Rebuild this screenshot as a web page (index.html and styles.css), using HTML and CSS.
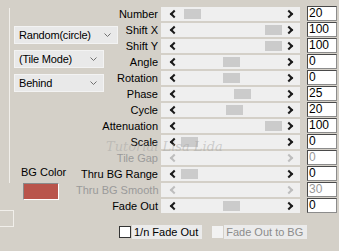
FILE: index.html
```html
<!DOCTYPE html>
<html lang="en">
<head>
    <meta charset="UTF-8">
    <meta name="viewport" content="width=device-width, initial-scale=1.0">
    <title>Tile Settings</title>
    <link rel="stylesheet" href="styles.css">
</head>
<body>
    <div class="dialog">
        <div class="side">
            <div class="frame">
                <div class="select wide">Random(circle)<svg class="chev" width="7" height="4" viewBox="0 0 7 4"><polyline points="0.5,0.5 3.5,3.5 6.5,0.5"/></svg></div>
                <div class="select">(Tile Mode)<svg class="chev" width="7" height="4" viewBox="0 0 7 4"><polyline points="0.5,0.5 3.5,3.5 6.5,0.5"/></svg></div>
                <div class="select">Behind<svg class="chev" width="7" height="4" viewBox="0 0 7 4"><polyline points="0.5,0.5 3.5,3.5 6.5,0.5"/></svg></div>
                <div class="bg-label">BG Color</div>
            </div>
            <div class="swatch"></div>
            <div class="stub"></div>
        </div>

        <div class="main">
            <div class="params">
                <label>Number</label>
                <div class="slider"><span class="arr l"></span><span class="thumb" style="left: 23px"></span><span class="arr r"></span></div>
                <div class="num">20</div>

                <label>Shift X</label>
                <div class="slider"><span class="arr l"></span><span class="thumb" style="left: 104px"></span><span class="arr r"></span></div>
                <div class="num">100</div>

                <label>Shift Y</label>
                <div class="slider"><span class="arr l"></span><span class="thumb" style="left: 104px"></span><span class="arr r"></span></div>
                <div class="num">100</div>

                <label>Angle</label>
                <div class="slider"><span class="arr l"></span><span class="thumb" style="left: 62px"></span><span class="arr r"></span></div>
                <div class="num">0</div>

                <label>Rotation</label>
                <div class="slider"><span class="arr l"></span><span class="thumb" style="left: 62px"></span><span class="arr r"></span></div>
                <div class="num">0</div>

                <label>Phase</label>
                <div class="slider"><span class="arr l"></span><span class="thumb" style="left: 73px"></span><span class="arr r"></span></div>
                <div class="num">25</div>

                <label>Cycle</label>
                <div class="slider"><span class="arr l"></span><span class="thumb" style="left: 65px"></span><span class="arr r"></span></div>
                <div class="num">20</div>

                <label>Attenuation</label>
                <div class="slider"><span class="arr l"></span><span class="thumb" style="left: 104px"></span><span class="arr r"></span></div>
                <div class="num">100</div>

                <label>Scale</label>
                <div class="slider"><span class="arr l"></span><span class="thumb" style="left: 20px"></span><span class="arr r"></span></div>
                <div class="num">0</div>

                <label class="off">Tile Gap</label>
                <div class="slider off"><span class="arr l"></span><span class="arr r"></span></div>
                <div class="num off">0</div>

                <label>Thru BG Range</label>
                <div class="slider"><span class="arr l"></span><span class="thumb" style="left: 20px"></span><span class="arr r"></span></div>
                <div class="num">0</div>

                <label class="off">Thru BG Smooth</label>
                <div class="slider off"><span class="arr l"></span><span class="arr r"></span></div>
                <div class="num off">30</div>

                <label>Fade Out</label>
                <div class="slider"><span class="arr l"></span><span class="thumb" style="left: 62px"></span><span class="arr r"></span></div>
                <div class="num">0</div>
            </div>

            <div class="checks">
                <div class="check"><span class="box"></span><span class="text">1/n Fade Out</span></div>
                <div class="check off"><span class="box"></span><span class="text">Fade Out to BG</span></div>
            </div>

            <div class="watermark">Tutorial Lisa Lida</div>
        </div>
    </div>
</body>
</html>
```

FILE: styles.css
```css
body {
    margin: 0;
    background-color: #d4d0c8;
    font-family: "Liberation Sans", Arial, sans-serif;
    font-size: 11px;
    color: #000;
}
.dialog {
    display: flex;
    height: 251px;
    overflow: hidden;
}
.side {
    width: 76px;
    flex: none;
}
.frame {
    display: flex;
    flex-direction: column;
    gap: 6px;
    margin: 8px 0 0 9px;
    height: 175px;
    box-sizing: border-box;
    padding: 18px 0 4px 4px;
    border-left: 1px solid #f1efeb;
}
.select {
    position: relative;
    width: 90px;
    height: 18px;
    box-sizing: border-box;
    padding-left: 4px;
    line-height: 16px;
    letter-spacing: -0.2px;
    background: #e9e9e9;
    border: 1px solid #f3f3f3;
}
.select.wide {
    width: 104px;
}
.chev {
    position: absolute;
    right: 6px;
    top: 6px;
    fill: none;
    stroke: #707070;
    stroke-width: 1;
}
.bg-label {
    margin-top: auto;
    margin-left: 7px;
    line-height: 13px;
}
.swatch {
    width: 36px;
    height: 17px;
    margin-left: 23px;
    box-sizing: border-box;
    background: #b9544b;
    border: 1px solid;
    border-color: #8a8a8a #fff #fff #8a8a8a;
}
.stub {
    width: 14px;
    height: 17px;
    margin-top: 10px;
    box-sizing: border-box;
    border: 1px solid #f1efeb;
    border-left: none;
}
.main {
    position: relative;
    padding-top: 6px;
}
.params {
    display: grid;
    grid-template-columns: 85px 139px 37px;
    grid-auto-rows: 16px;
}
.params label {
    text-align: right;
    padding-right: 3px;
    line-height: 16px;
    white-space: nowrap;
}
.params label.off {
    color: #9a9a9a;
}
.slider {
    position: relative;
    height: 14px;
    margin-top: 1px;
    background: #efefef;
}
.arr {
    position: absolute;
    top: 4px;
    width: 4px;
    height: 4px;
    border: solid #1a1a1a;
    border-width: 0 0 2px 2px;
}
.arr.l {
    left: 10px;
    transform: rotate(45deg);
}
.arr.r {
    right: 8px;
    transform: rotate(-135deg);
}
.slider.off .arr {
    border-color: #bdbdbd;
}
.thumb {
    position: absolute;
    top: 2px;
    width: 17px;
    height: 10px;
    background: #cbcbcb;
}
.num {
    width: 30px;
    height: 15px;
    margin-left: 7px;
    box-sizing: border-box;
    padding-left: 1px;
    font-size: 12px;
    line-height: 13px;
    background: #fff;
    border: 1px solid;
    border-color: #4a4a4a #8c8c8c #8c8c8c #4a4a4a;
}
.num.off {
    color: #999;
}
.checks {
    display: flex;
    gap: 10px;
    margin: 11px 0 0 43px;
}
.check {
    display: flex;
    align-items: center;
    gap: 1px;
}
.check .box {
    width: 12px;
    height: 12px;
    box-sizing: border-box;
    background: #fff;
    border: 1px solid #333;
}
.check .text {
    padding: 0 4px 0 2px;
    line-height: 14px;
    background: #ebebeb;
}
.check.off .box {
    width: 11px;
    border: none;
    background: #f2f2f2;
}
.check.off .text {
    color: #8c8c8c;
}
.watermark {
    position: absolute;
    left: 30px;
    top: 139px;
    font-family: "DejaVu Serif", serif;
    font-style: italic;
    font-size: 13px;
    color: rgba(160, 160, 160, 0.45);
    pointer-events: none;
}
```
